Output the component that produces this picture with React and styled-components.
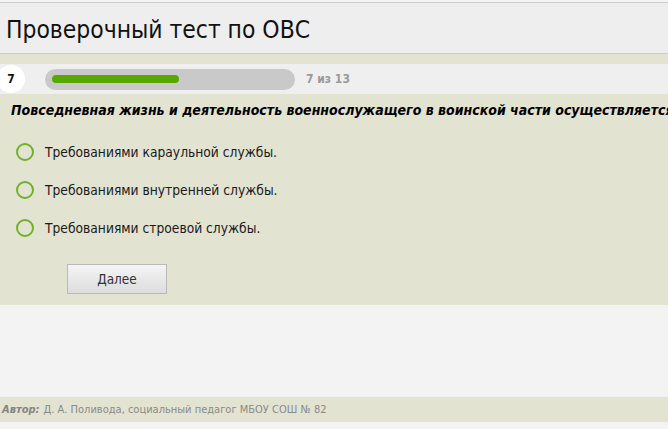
import React from 'react'
import styled, { createGlobalStyle } from 'styled-components'

const GlobalStyle = createGlobalStyle`
  html, body {
    margin: 0;
    padding: 0;
    background: #f3f3f3;
    overflow: hidden;
  }
  body {
    font-family: "DejaVu Sans Condensed", "DejaVu Sans", sans-serif;
  }
`

const Page = styled.div`
  width: 668px;
  padding-top: 2px;
`

const Header = styled.div`
  height: 50px;
  background: #eeeeee;
  border-top: 1px solid #cccccc;
  border-bottom: 1px solid #cccccc;
  display: flex;
  align-items: center;
  padding-left: 6px;
`

const Title = styled.h1`
  margin: 0;
  padding-top: 2px;
  font-size: 24.4px;
  font-weight: normal;
  color: #111;
`

const Band = styled.div`
  height: 10px;
  background: #e3e3d1;
`

const ProgressRow = styled.div`
  height: 30px;
  background: #efefef;
  display: flex;
  align-items: center;
`

const Number = styled.div`
  width: 28px;
  height: 28px;
  margin-left: -3px;
  border-radius: 50%;
  background: #fff;
  display: flex;
  align-items: center;
  justify-content: center;
  font-size: 12px;
  font-weight: bold;
  color: #111;
`

const Track = styled.div`
  margin-left: 20px;
  width: 250px;
  height: 21px;
  border-radius: 11px;
  background: #c9c9c9;
  display: flex;
  align-items: center;
  padding: 0 7px;
  box-sizing: border-box;
`

const Fill = styled.div`
  height: 8px;
  border-radius: 4px;
  background: #59a800;
`

const Counter = styled.span`
  margin-left: 11px;
  font-size: 12px;
  font-weight: bold;
  color: #9a9a9a;
`

const Question = styled.div`
  background: #e3e3d1;
  padding: 8px 0 11px;
`

const QuestionText = styled.div`
  padding-left: 11px;
  font-size: 14px;
  line-height: 16px;
  font-weight: bold;
  font-style: italic;
  color: #000;
  white-space: nowrap;
`

const Options = styled.div`
  margin-top: 15px;
  display: flex;
  flex-direction: column;
`

const Option = styled.label`
  height: 38px;
  display: flex;
  align-items: center;
  padding-left: 16px;
  font-size: 13.7px;
  color: #1a1a1a;
  cursor: pointer;
`

const Radio = styled.span`
  width: 18px;
  height: 18px;
  box-sizing: border-box;
  border-radius: 50%;
  border: 2px solid #72b02c;
  margin-right: 11px;
  flex-shrink: 0;
`

const Button = styled.button`
  margin: 17px 0 0 67px;
  width: 100px;
  height: 30px;
  border: 1px solid #b9b9b9;
  background: linear-gradient(#f4f4f4, #dddddd);
  font-family: inherit;
  font-size: 13.5px;
  color: #333;
  display: block;
`

const Empty = styled.div`
  height: 92px;
`

const Footer = styled.div`
  height: 25px;
  background: #e3e3d1;
  box-shadow: 0 1px 2px rgba(0, 0, 0, 0.18);
  display: flex;
  align-items: center;
  padding-left: 2px;
  font-size: 11px;
  color: #8a8a8a;
`

const Author = styled.b`
  font-style: italic;
  margin-right: 4px;
  color: #858585;
`

const answers = [
  'Требованиями караульной службы.',
  'Требованиями внутренней службы.',
  'Требованиями строевой службы.',
]

export default function App() {
  return (
    <Page>
      <GlobalStyle />
      <Header>
        <Title>Проверочный тест по ОВС</Title>
      </Header>
      <Band />
      <ProgressRow>
        <Number>7</Number>
        <Track>
          <Fill style={{ width: `${(7 / 13) * 100}%` }} />
        </Track>
        <Counter>7 из 13</Counter>
      </ProgressRow>
      <Question>
        <QuestionText>
          Повседневная жизнь и деятельность военнослужащего в воинской части осуществляется:
        </QuestionText>
        <Options>
          {answers.map((a) => (
            <Option key={a}>
              <Radio />
              {a}
            </Option>
          ))}
        </Options>
        <Button>Далее</Button>
      </Question>
      <Empty />
      <Footer>
        <Author>Автор:</Author>
        Д. А. Поливода, социальный педагог МБОУ СОШ № 82
      </Footer>
    </Page>
  )
}
